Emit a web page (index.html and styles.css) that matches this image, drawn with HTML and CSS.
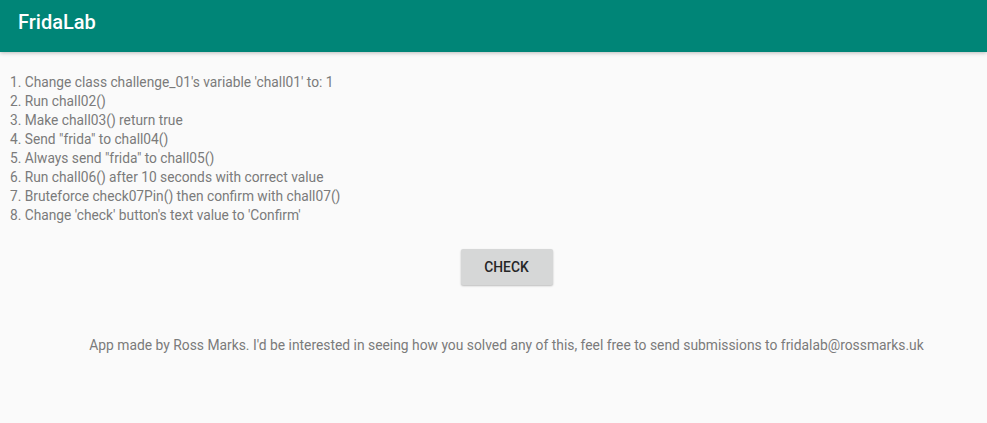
FILE: index.html
```html
<!DOCTYPE html>
<html>
<head>
<meta charset="utf-8">
<link rel="stylesheet" href="styles.css">
</head>
<body>
<header class="toolbar"><span class="title">FridaLab</span></header>
<main class="content">
  <div class="list">
    <div>1. Change class challenge_01's variable 'chall01' to: 1</div>
    <div>2. Run chall02()</div>
    <div>3. Make chall03() return true</div>
    <div>4. Send "frida" to chall04()</div>
    <div>5. Always send "frida" to chall05()</div>
    <div>6. Run chall06() after 10 seconds with correct value</div>
    <div>7. Bruteforce check07Pin() then confirm with chall07()</div>
    <div>8. Change 'check' button's text value to 'Confirm'</div>
  </div>
  <div class="center">
    <button class="btn">CHECK</button>
  </div>
  <div class="center footer">App made by Ross Marks. I'd be interested in seeing how you solved any of this, feel free to send submissions to fridalab@rossmarks.uk</div>
</main>
</body>
</html>
```
FILE: styles.css
```css
html, body { margin: 0; padding: 0; }
body {
  background: #fafafa;
  font-family: Roboto, "Noto Sans", sans-serif;
  width: 987px;
  height: 423px;
  overflow: hidden;
}
.toolbar {
  height: 52px;
  background: #008577;
  display: flex;
  align-items: center;
  padding-left: 18px;
  box-shadow: 0 1px 4px rgba(0,0,0,0.25);
  position: relative;
}
.title {
  color: #fff;
  font-size: 20px;
  font-weight: 500;
  margin-top: -8px;
}
.content { padding: 21px 0 0 10px; }
.list {
  font-size: 13.75px;
  line-height: 19px;
  color: #7b7b7b;
}
.center {
  display: flex;
  justify-content: center;
  padding-left: 16px;
}
.btn {
  margin-top: 24px;
  width: 92px;
  height: 36px;
  background: #d6d7d7;
  border: none;
  border-radius: 2px;
  box-shadow: 0 1px 2px rgba(0,0,0,0.25);
  font-family: Roboto, sans-serif;
  font-size: 13.8px;
  font-weight: 500;
  color: #262626;
  padding: 0;
}
.footer {
  margin-top: 51px;
  font-size: 13.85px;
  color: #7b7b7b;
  line-height: 19px;
}
```
